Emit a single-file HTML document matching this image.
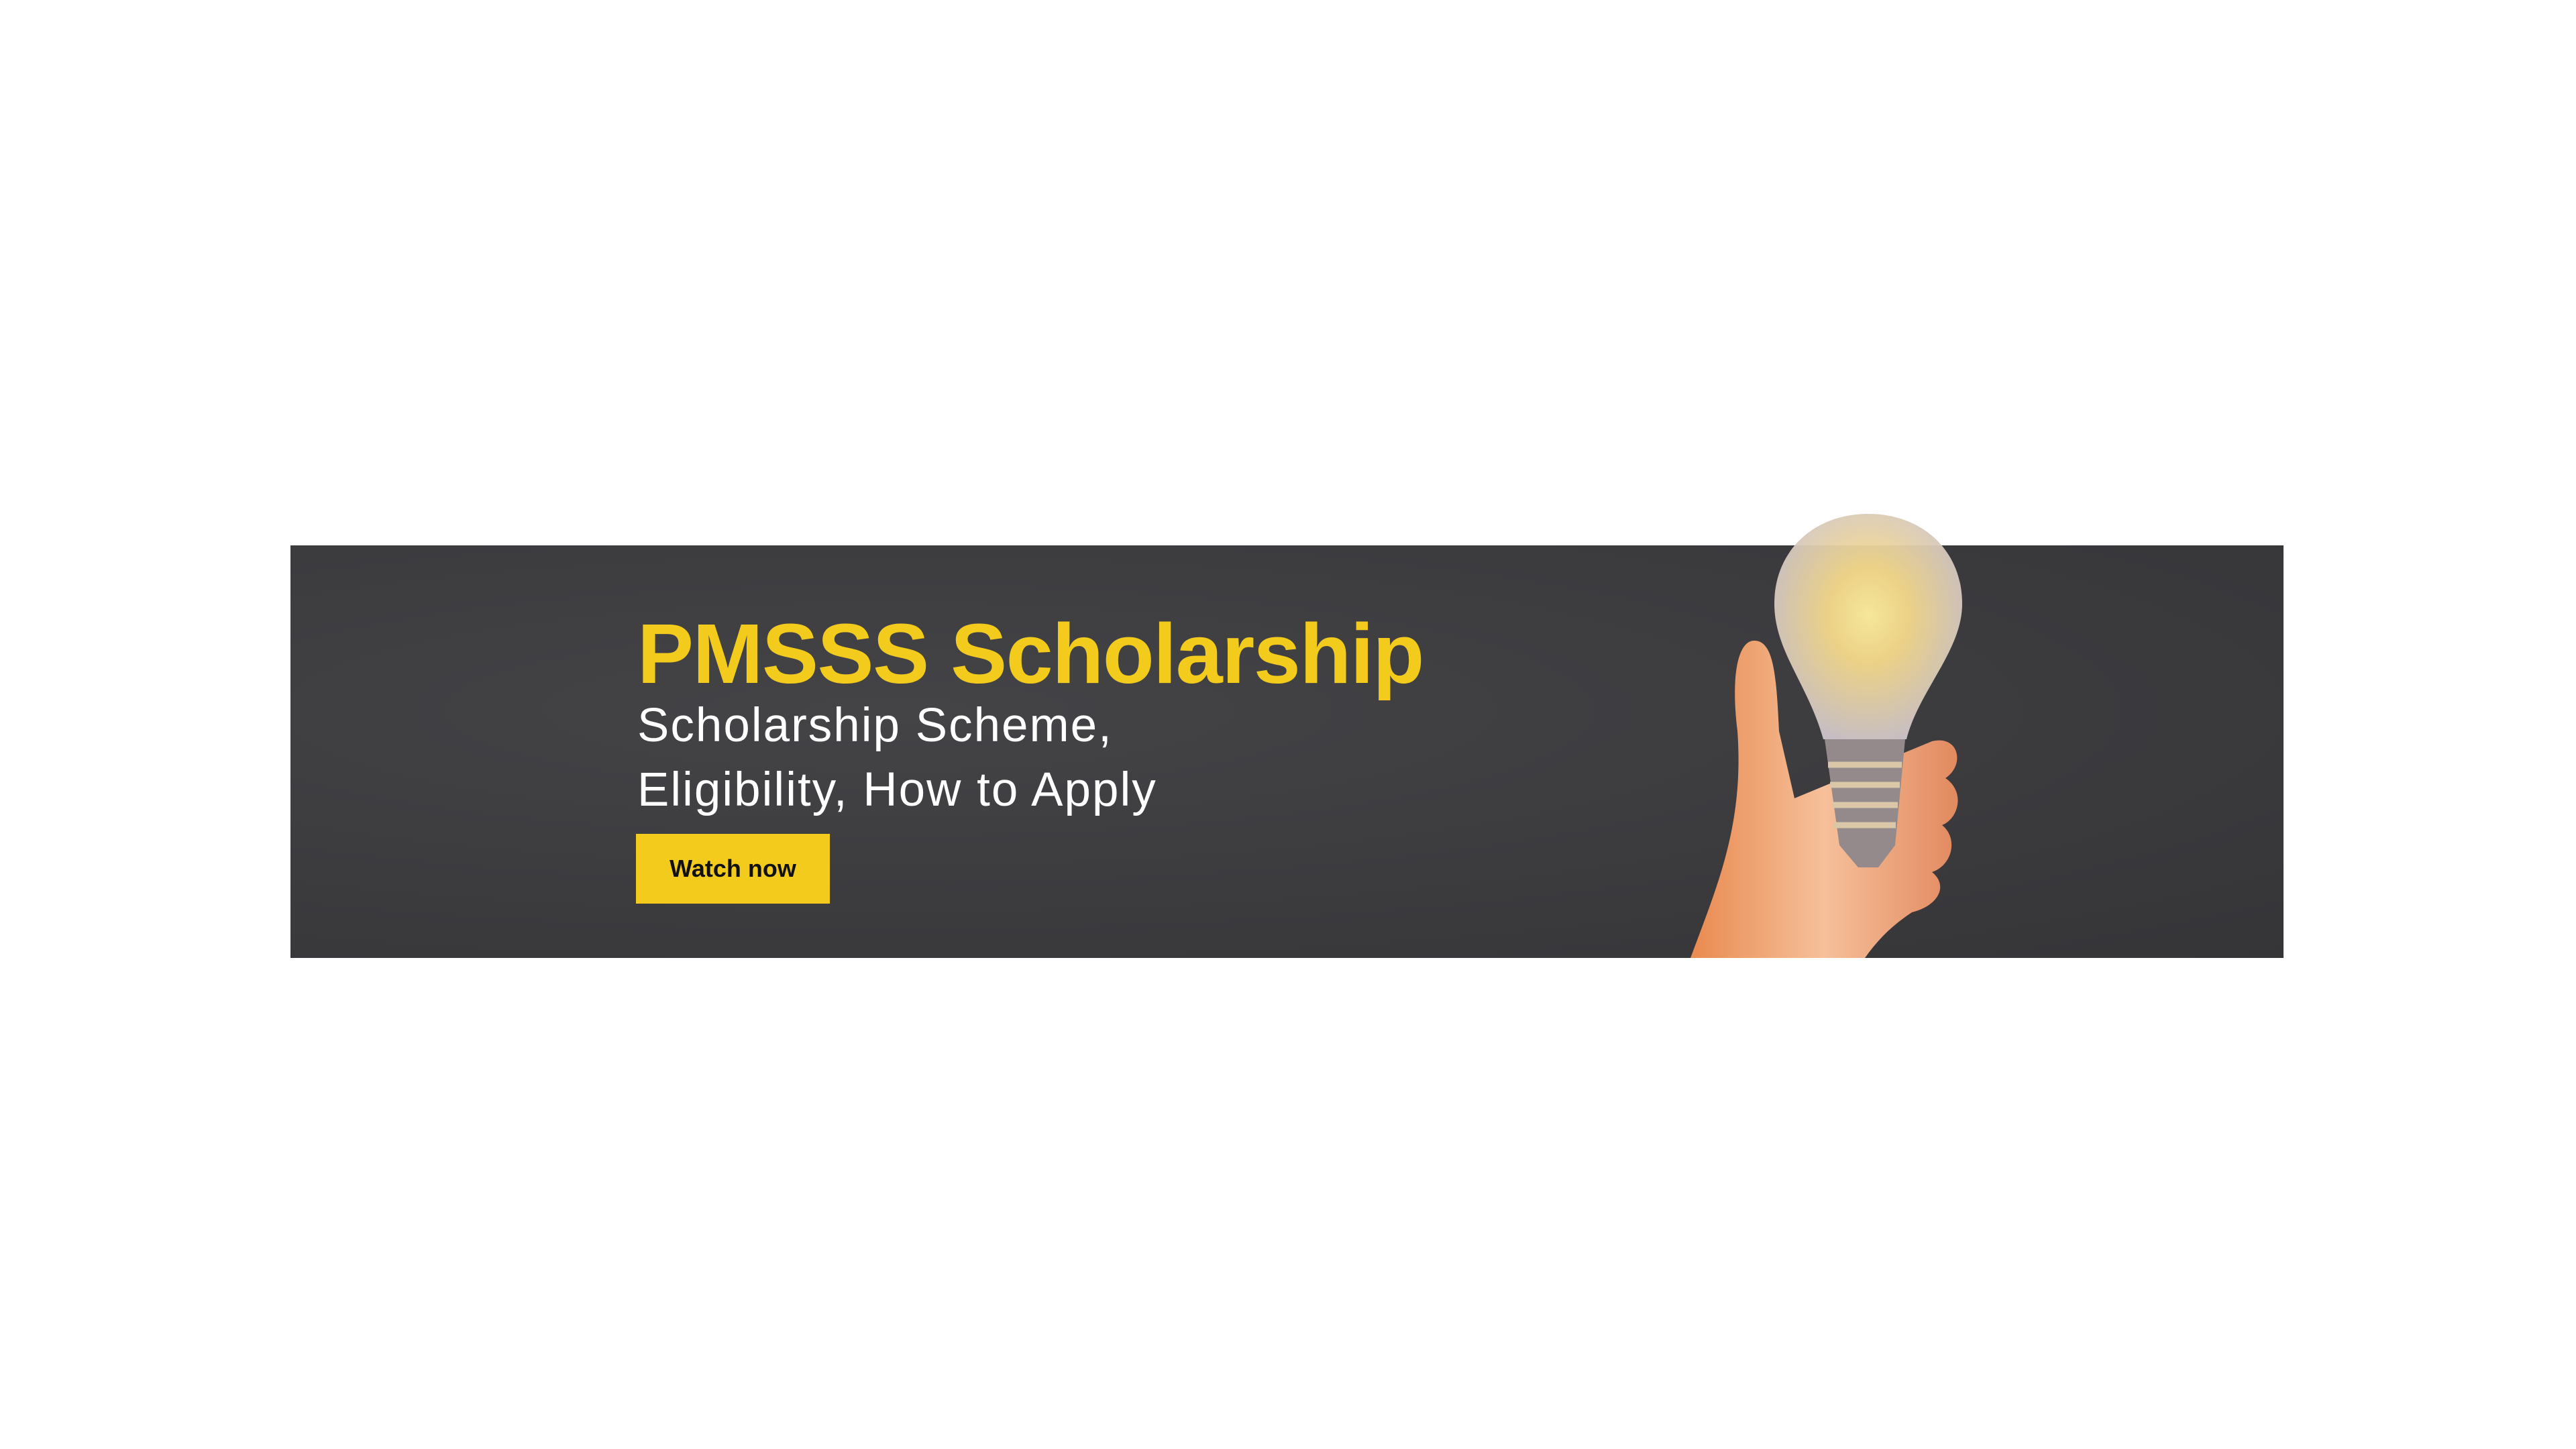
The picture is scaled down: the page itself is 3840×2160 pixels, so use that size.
<!DOCTYPE html>
<html><head><style>
html,body{margin:0;padding:0;background:#fff;width:3840px;height:2160px;overflow:hidden;font-family:"Liberation Sans",sans-serif}
.banner{position:absolute;left:433px;top:813px;width:2971px;height:615px;background:#3c3c3f;background-image:radial-gradient(ellipse at 30% 40%,#444447 0%,#3b3b3e 60%,#353538 100%)}
.t{position:absolute;left:950px;top:912px;font-weight:bold;color:#F2CB1C;font-size:126px;letter-spacing:-1.5px;white-space:nowrap;line-height:1}
.s{position:absolute;left:950px;color:#fff;font-size:71px;letter-spacing:2px;white-space:nowrap;line-height:1}
.b{position:absolute;left:948px;top:1243px;width:289px;height:104px;background:#F2CB1C;color:#111;font-weight:bold;font-size:36px;display:flex;align-items:center;justify-content:center}
</style></head><body>
<div class="banner"></div>
<div class="t">PMSSS Scholarship</div>
<div class="s" style="top:1046px">Scholarship Scheme,</div>
<div class="s" style="top:1142px">Eligibility, How to Apply</div>
<div class="b">Watch now</div>
<svg style="position:absolute;left:2480px;top:760px" width="480" height="668" viewBox="0 0 480 668">
<defs>
<radialGradient id="g" cx="0.5" cy="0.45" r="0.6"><stop offset="0" stop-color="#fff0a0"/><stop offset="0.35" stop-color="#f5d98a"/><stop offset="1" stop-color="#cbc3cf"/></radialGradient>
<linearGradient id="h" x1="0" x2="1"><stop offset="0" stop-color="#e98a50"/><stop offset="0.5" stop-color="#f6c09a"/><stop offset="1" stop-color="#e2895f"/></linearGradient>
</defs>
<path d="M40 668 C80 560 120 470 110 330 C100 250 110 195 135 195 C165 195 168 250 172 330 L195 430 L400 345 C440 335 450 380 420 400 C450 420 440 460 415 470 C440 490 430 530 400 540 C425 560 410 590 370 600 C340 620 320 640 300 668 Z" fill="url(#h)"/>
<path d="M305 6 C225 6 165 60 165 140 C165 210 215 260 238 342 L362 342 C380 270 445 210 445 140 C445 60 385 6 305 6 Z" fill="url(#g)" opacity="0.95"/>
<path d="M240 342 L360 342 L345 500 L320 533 L290 533 L262 500 Z" fill="#948a8c"/>
<path d="M245 380 H355 M248 410 H352 M251 440 H349 M254 470 H346" stroke="#d9c7a8" stroke-width="9"/>
</svg>
</body></html>
